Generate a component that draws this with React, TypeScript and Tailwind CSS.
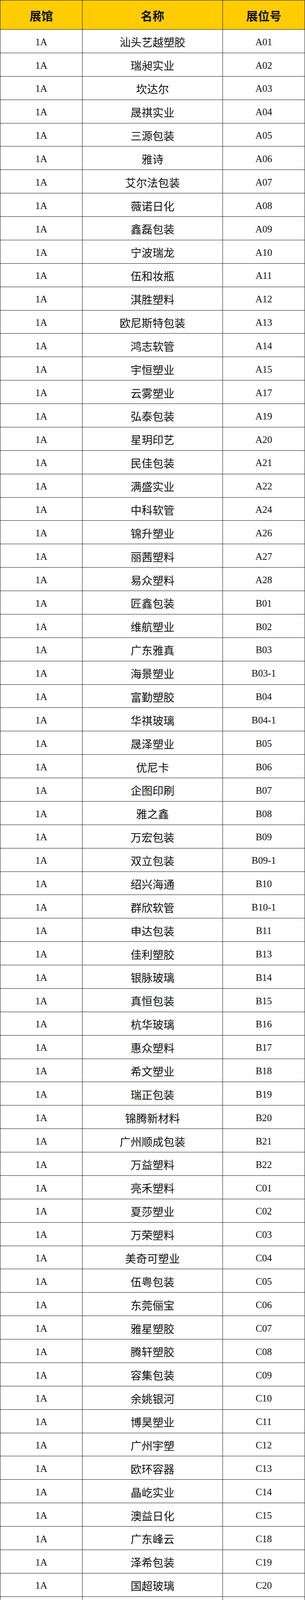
import React from "react";

const rows: [string, string][] = [
  ["汕头艺越塑胶", "A01"],
  ["瑞昶实业", "A02"],
  ["坎达尔", "A03"],
  ["晟祺实业", "A04"],
  ["三源包装", "A05"],
  ["雅诗", "A06"],
  ["艾尔法包装", "A07"],
  ["薇诺日化", "A08"],
  ["鑫磊包装", "A09"],
  ["宁波瑞龙", "A10"],
  ["伍和妆瓶", "A11"],
  ["淇胜塑料", "A12"],
  ["欧尼斯特包装", "A13"],
  ["鸿志软管", "A14"],
  ["宇恒塑业", "A15"],
  ["云雾塑业", "A17"],
  ["弘泰包装", "A19"],
  ["星玥印艺", "A20"],
  ["民佳包装", "A21"],
  ["满盛实业", "A22"],
  ["中科软管", "A24"],
  ["锦升塑业", "A26"],
  ["丽茜塑料", "A27"],
  ["易众塑料", "A28"],
  ["匠鑫包装", "B01"],
  ["维航塑业", "B02"],
  ["广东雅真", "B03"],
  ["海景塑业", "B03-1"],
  ["富勤塑胶", "B04"],
  ["华祺玻璃", "B04-1"],
  ["晟泽塑业", "B05"],
  ["优尼卡", "B06"],
  ["企图印刷", "B07"],
  ["雅之鑫", "B08"],
  ["万宏包装", "B09"],
  ["双立包装", "B09-1"],
  ["绍兴海通", "B10"],
  ["群欣软管", "B10-1"],
  ["申达包装", "B11"],
  ["佳利塑胶", "B13"],
  ["银脉玻璃", "B14"],
  ["真恒包装", "B15"],
  ["杭华玻璃", "B16"],
  ["惠众塑料", "B17"],
  ["希文塑业", "B18"],
  ["瑞正包装", "B19"],
  ["锦腾新材料", "B20"],
  ["广州顺成包装", "B21"],
  ["万益塑料", "B22"],
  ["亮禾塑料", "C01"],
  ["夏莎塑业", "C02"],
  ["万荣塑料", "C03"],
  ["美奇可塑业", "C04"],
  ["伍粤包装", "C05"],
  ["东莞俪宝", "C06"],
  ["雅星塑胶", "C07"],
  ["腾轩塑胶", "C08"],
  ["容集包装", "C09"],
  ["余姚银河", "C10"],
  ["博昊塑业", "C11"],
  ["广州宇塑", "C12"],
  ["欧环容器", "C13"],
  ["晶屹实业", "C14"],
  ["澳益日化", "C15"],
  ["广东峰云", "C18"],
  ["泽希包装", "C19"],
  ["国超玻璃", "C20"],
  ["顺源塑料", "C21"],
  ["容光塑业", "C22"],
  ["凯沛包装", "C23"],
  ["金椰塑业", "C24"],
  ["科尔美妆", "C25"],
  ["伊梵玻璃", "C28"],
  ["还珠容器", "C29"],
  ["千峰玻璃", "C37"],
  ["圣瑞斯包装", "C38"],
  ["兴桥塑业", "C39"],
  ["中兴五金", "C42"],
];

const serif = "font-['Liberation_Serif','Times_New_Roman',serif]";
const cjk = "font-['Noto_Sans_CJK_SC','Noto_Sans',sans-serif]";

export default function App() {
  return (
    <div className="w-[780px] bg-white text-[#111]">
      <div className="w-[780px] border-l border-r border-[#151515]">
        <div className="grid grid-cols-[210px_359px_1fr] h-[76px] bg-[#FFCC00] border-t border-b border-[#151515]">
          <div
            className={`flex items-center justify-center border-r border-[#151515] pt-[2px] text-[30px] font-bold ${cjk}`}
          >
            展馆
          </div>
          <div
            className={`flex items-center justify-center border-r border-[#151515] pt-[2px] text-[30px] font-bold ${cjk}`}
          >
            名称
          </div>
          <div
            className={`flex items-center justify-center pt-[2px] text-[30px] font-bold ${cjk}`}
          >
            展位号
          </div>
        </div>
        {rows.map(([name, code]) => (
          <div
            key={code}
            className="grid grid-cols-[210px_359px_1fr] h-[59.88px] border-b border-[#151515]"
          >
            <div
              className={`flex items-center justify-center border-r border-[#151515] pt-[4px] text-[25px] ${serif}`}
            >
              1A
            </div>
            <div
              className={`flex items-center justify-center border-r border-[#151515] pt-[4px] text-[28px] ${cjk}`}
            >
              {name}
            </div>
            <div
              className={`flex items-center justify-center pt-[4px] text-[25px] ${serif}`}
            >
              {code}
            </div>
          </div>
        ))}
      </div>
    </div>
  );
}
